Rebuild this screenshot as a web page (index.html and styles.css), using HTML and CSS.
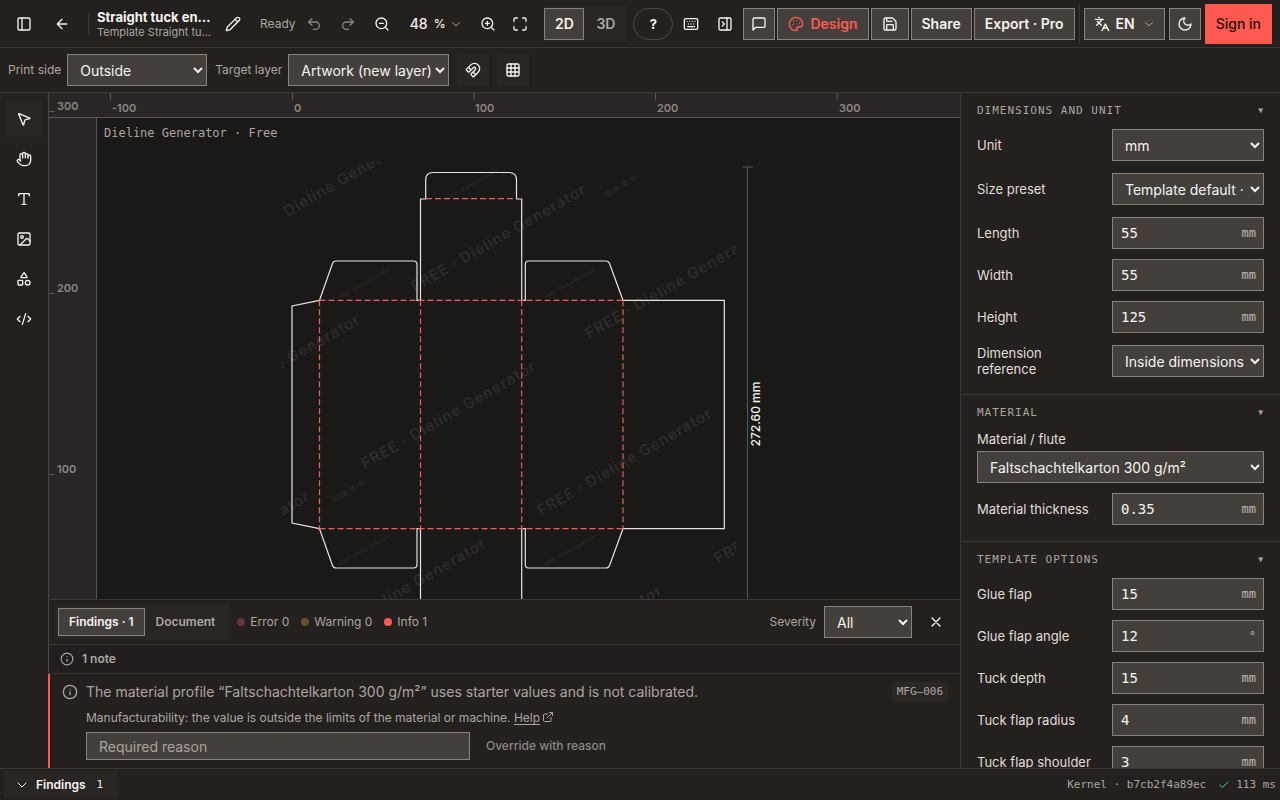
FILE: index.html
```html
<!DOCTYPE html>
<html lang="en">
<head>
<meta charset="utf-8">
<meta name="viewport" content="width=device-width, initial-scale=1">
<title>Dieline Generator</title>
<link rel="stylesheet" href="styles.css">
</head>
<body>
<div class="app">
  <header class="topbar">
    <button class="icon-btn" aria-label="Toggle panel"><svg class="ic" viewBox="0 0 24 24"><rect x="3" y="3" width="18" height="18" rx="2"/><path d="M9 3v18"/></svg></button>
    <button class="icon-btn back" aria-label="Back"><svg class="ic" viewBox="0 0 24 24"><path d="m12 19-7-7 7-7M19 12H5"/></svg></button>
    <span class="divider"></span>
    <div class="title">
      <h1>Straight tuck en…</h1>
      <p>Template Straight tu…</p>
    </div>
    <button class="icon-btn rename" aria-label="Rename"><svg class="ic" viewBox="0 0 24 24"><path d="M21.174 6.812a1 1 0 0 0-3.986-3.987L3.842 16.174a2 2 0 0 0-.5.83l-1.321 4.352a.5.5 0 0 0 .623.622l4.353-1.32a2 2 0 0 0 .83-.497zM15 5l4 4"/></svg></button>
    <span class="status">Ready</span>
    <button class="icon-btn dim" aria-label="Undo"><svg class="ic" viewBox="0 0 24 24"><path d="M9 14 4 9l5-5"/><path d="M4 9h10.500a5.500 5.500 0 0 1 0 11H11"/></svg></button>
    <button class="icon-btn dim" aria-label="Redo"><svg class="ic" viewBox="0 0 24 24"><path d="m15 14 5-5-5-5"/><path d="M20 9H9.500a5.500 5.500 0 0 0 0 11H13"/></svg></button>
    <button class="icon-btn" aria-label="Zoom out"><svg class="ic" viewBox="0 0 24 24"><circle cx="11" cy="11" r="8"/><path d="m21 21-4.350-4.350M8 11h6"/></svg></button>
    <div class="zoom">
      <input type="text" value="48" aria-label="Zoom percent"><span>%</span>
      <button aria-label="Zoom presets"><svg class="ic small" viewBox="0 0 24 24"><path d="m5 9 7 7 7-7"/></svg></button>
    </div>
    <button class="icon-btn" aria-label="Zoom in"><svg class="ic" viewBox="0 0 24 24"><circle cx="11" cy="11" r="8"/><path d="m21 21-4.350-4.350M11 8v6M8 11h6"/></svg></button>
    <button class="icon-btn fit" aria-label="Fit to screen"><svg class="ic" viewBox="0 0 24 24"><path d="M8 3H5a2 2 0 0 0-2 2v3M21 8V5a2 2 0 0 0-2-2h-3M3 16v3a2 2 0 0 0 2 2h3M16 21h3a2 2 0 0 0 2-2v-3"/></svg></button>
    <div class="segment view">
      <button class="box-btn on">2D</button>
      <button class="seg-off">3D</button>
    </div>
    <button class="help" aria-label="Help">?</button>
    <button class="icon-btn" aria-label="Keyboard shortcuts"><svg class="ic" viewBox="0 0 24 24"><rect x="2" y="4" width="20" height="16" rx="2"/><path d="M6 8h.01M10 8h.01M14 8h.01M18 8h.01M8 12h.01M12 12h.01M16 12h.01M7 16h10"/></svg></button>
    <button class="icon-btn" aria-label="Collapse inspector"><svg class="ic" viewBox="0 0 24 24"><rect x="3" y="3" width="18" height="18" rx="2"/><path d="M15 3v18M8 9l3 3-3 3"/></svg></button>
    <button class="box-btn square" aria-label="Comments"><svg class="ic" viewBox="0 0 24 24"><path d="M21 15a2 2 0 0 1-2 2H7l-4 4V5a2 2 0 0 1 2-2h14a2 2 0 0 1 2 2z"/></svg></button>
    <button class="box-btn design"><svg class="ic" viewBox="0 0 24 24"><path d="M12 22a10 10 0 1 1 10-10c0 2.500-2 4.500-4.500 4.500H15a2 2 0 0 0-1.500 3.300c.9 1 .2 2.200-1.500 2.200z"/><path d="M13.500 6.500h.01M17.500 10.500h.01M6.500 12.500h.01M8.500 7.500h.01"/></svg>Design</button>
    <button class="box-btn" aria-label="Save"><svg class="ic" viewBox="0 0 24 24"><path d="M15.200 3a2 2 0 0 1 1.400.6l3.800 3.800a2 2 0 0 1 .6 1.400V19a2 2 0 0 1-2 2H5a2 2 0 0 1-2-2V5a2 2 0 0 1 2-2z"/><path d="M17 21v-7a1 1 0 0 0-1-1H8a1 1 0 0 0-1 1v7M7 3v4a1 1 0 0 0 1 1h7"/></svg></button>
    <button class="box-btn">Share</button>
    <button class="box-btn">Export · Pro</button>
    <span class="divider account"></span>
    <button class="box-btn lang"><svg class="ic" viewBox="0 0 24 24"><path d="m5 8 6 6M4 14l6-6 2-3M2 5h12M7 2h1M22 22l-5-10-5 10M14 18h6"/></svg>EN<svg class="ic small" viewBox="0 0 24 24"><path d="m5 9 7 7 7-7"/></svg></button>
    <button class="box-btn square theme" aria-label="Dark theme"><svg class="ic" viewBox="0 0 24 24"><path d="M12 3a6 6 0 0 0 9 9 9 9 0 1 1-9-9z"/></svg></button>
    <button class="signin">Sign in</button>
  </header>

  <div class="subbar">
    <label for="side">Print side</label>
    <select id="side" class="w-side"><option>Outside</option></select>
    <label for="layer">Target layer</label>
    <select id="layer" class="w-layer"><option>Artwork (new layer)</option></select>
    <button class="icon-btn tint" aria-label="Snap"><svg class="ic" viewBox="0 0 24 24"><path d="m12 15 4 4M2.352 10.648a1.205 1.205 0 0 0 0 1.704l2.296 2.296a1.205 1.205 0 0 0 1.704 0l6.029-6.029a1 1 0 1 1 3 3l-6.029 6.029a1.205 1.205 0 0 0 0 1.704l2.296 2.296a1.205 1.205 0 0 0 1.704 0l6.365-6.367A1 1 0 0 0 8.716 4.282zM5 8l4 4"/></svg></button>
    <button class="icon-btn tint" aria-label="Grid"><svg class="ic" viewBox="0 0 24 24"><rect x="3" y="3" width="18" height="18" rx="2"/><path d="M3 9h18M3 15h18M9 3v18M15 3v18"/></svg></button>
  </div>

  <main class="work">
    <nav class="rail" aria-label="Tools">
      <button class="active" aria-label="Select"><svg class="ic" viewBox="0 0 24 24"><path d="M4.037 4.688a.495.495 0 0 1 .651-.651l16 6.500a.5.5 0 0 1-.063.947l-6.124 1.580a2 2 0 0 0-1.438 1.435l-1.579 6.126a.5.5 0 0 1-.947.063z"/></svg></button>
      <button aria-label="Pan"><svg class="ic" viewBox="0 0 24 24"><path d="M18 11V6a2 2 0 0 0-4 0M14 10V4a2 2 0 0 0-4 0v2M10 10.500V6a2 2 0 0 0-4 0v8"/><path d="M18 8a2 2 0 1 1 4 0v6a8 8 0 0 1-8 8h-2c-2.800 0-4.500-.860-5.990-2.340l-3.600-3.600a2 2 0 0 1 2.830-2.820L7 15"/></svg></button>
      <button aria-label="Text"><svg class="ic" viewBox="0 0 24 24"><path d="M12 4v16M4 7V5a1 1 0 0 1 1-1h14a1 1 0 0 1 1 1v2M9 20h6"/></svg></button>
      <button aria-label="Image"><svg class="ic" viewBox="0 0 24 24"><rect x="3" y="3" width="18" height="18" rx="2"/><circle cx="9" cy="9" r="2"/><path d="m21 15-3.086-3.086a2 2 0 0 0-2.828 0L6 21"/></svg></button>
      <button aria-label="Shapes"><svg class="ic" viewBox="0 0 24 24"><path d="M8.300 10a.7.7 0 0 1-.626-1.079L11.400 3a.7.7 0 0 1 1.198-.043L16.300 8.900a.7.7 0 0 1-.572 1.100z"/><rect x="3" y="14" width="7" height="7" rx="1"/><circle cx="17.500" cy="17.500" r="3.500"/></svg></button>
      <button aria-label="Code"><svg class="ic" viewBox="0 0 24 24"><path d="m18 16 4-4-4-4M6 8l-4 4 4 4M14.500 4l-5 16"/></svg></button>
    </nav>

    <section class="stage">
      <svg class="canvas" viewBox="49 93 911 506" preserveAspectRatio="xMinYMin slice" role="img" aria-label="Dieline drawing">
        <defs>
          <clipPath id="mark-area"><rect x="281" y="162" width="455" height="500"/></clipPath>
        </defs>
        <g class="mark" clip-path="url(#mark-area)">
          <text transform="translate(239 245) rotate(-30)">FREE · Dieline Generator</text>
          <text transform="translate(415 292) rotate(-30)">FREE · Dieline Generator</text>
          <text transform="translate(589 339) rotate(-30)">FREE · Dieline Generator</text>
          <text transform="translate(189 422) rotate(-30)">FREE · Dieline Generator</text>
          <text transform="translate(365 469) rotate(-30)">FREE · Dieline Generator</text>
          <text transform="translate(541 516) rotate(-30)">FREE · Dieline Generator</text>
          <text transform="translate(718 564) rotate(-30)">FREE · Dieline Generator</text>
          <text transform="translate(139 599) rotate(-30)">FREE · Dieline Generator</text>
          <text transform="translate(315 646) rotate(-30)">FREE · Dieline Generator</text>
          <text transform="translate(491 693) rotate(-30)">FREE · Dieline Generator</text>
        </g>
        <g class="mark-date">
          <text transform="translate(605 198) rotate(-30)">2026-10-11</text>
          <text transform="translate(333 503) rotate(-30)">2026-10-11</text>
        </g>
        <g class="mark-small">
          <text transform="translate(448 200) rotate(-30)">FREE · Dieline Generator</text>
          <text transform="translate(340 299) rotate(-30)">FREE · Dieline Generator</text>
          <text transform="translate(546 299) rotate(-30)">FREE · Dieline Generator</text>
          <text transform="translate(340 566) rotate(-30)">FREE · Dieline Generator</text>
          <text transform="translate(546 566) rotate(-30)">FREE · Dieline Generator</text>
        </g>
        <g class="cut">
          <path d="M319.500 300.300 292 306V523L319.500 528.700"/>
          <path d="M319.500 300.300 332.500 263.500Q333.500 261 336 261H413.500Q417 261 417 264.500V300.300H420.500V199H425.700V180Q425.700 172.500 433 172.500H509Q516.500 172.500 516.500 180V199H521.700V300.300H525.300V264.500Q525.300 261 528.500 261H606Q608.500 261 609.500 263.500L623 300.300H724.300V528.700H623L609.500 565.500Q608.500 568 606 568H528.500Q525.300 568 525.300 564.500V528.700H521.700V720"/>
          <path d="M420.500 720V528.700H417V564.500Q417 568 413.500 568H336Q333.500 568 332.500 565.500L319.500 528.700"/>
        </g>
        <g class="fold">
          <path d="M426 198.700H516.500M319.500 300.300H623M319.500 528.700H623"/>
          <path d="M319.500 300.300V528.700M420.500 300.300V528.700M521.700 300.300V528.700M623 300.300V528.700"/>
        </g>
        <path class="dim-line" d="M742.500 167H752.500M747.500 167V720"/>
        <text class="dim-text" transform="translate(760 414) rotate(-90)">272.60 mm</text>
        <text class="brand" x="104" y="137">Dieline Generator · Free</text>
        <path class="ruler-bg" d="M48 93H3000V117H96V3000H48Z"/>
        <path class="ruler-line" d="M48 117.500H3000M96.500 117V3000M48 111.500H55M48 293.500H55M48 474.500H55M110.500 93V100M292.500 93V100M474 93V100M655.500 93V100M837 93V100"/>
        <g class="ruler-text">
          <text x="57" y="110">300</text><text x="57" y="292">200</text><text x="57" y="473">100</text>
          <text x="112" y="112">-100</text><text x="294" y="112">0</text><text x="475" y="112">100</text><text x="657" y="112">200</text><text x="839" y="112">300</text>
        </g>
      </svg>

      <section class="findings">
        <div class="findings-head">
          <div class="segment tabs">
            <button class="box-btn on">Findings · 1</button>
            <button class="seg-off">Document</button>
          </div>
          <span class="count error">Error 0</span>
          <span class="count warning">Warning 0</span>
          <span class="count info">Info 1</span>
          <label for="severity">Severity</label>
          <select id="severity" class="w-severity"><option>All</option></select>
          <button class="icon-btn" aria-label="Close"><svg class="ic" viewBox="0 0 24 24"><path d="M18 6 6 18M6 6l12 12"/></svg></button>
        </div>
        <div class="findings-note"><svg class="ic note" viewBox="0 0 24 24"><circle cx="12" cy="12" r="10"/><path d="M12 16v-4M12 8h.01"/></svg>1 note</div>
        <article class="finding">
          <svg class="ic" viewBox="0 0 24 24"><circle cx="12" cy="12" r="10"/><path d="M12 16v-4M12 8h.01"/></svg>
          <div class="finding-body">
            <div class="finding-title"><p>The material profile “Faltschachtelkarton 300 g/m²” uses starter values and is not calibrated.</p><code>MFG–006</code></div>
            <p class="finding-desc">Manufacturability: the value is outside the limits of the material or machine. <a href="#help">Help</a> <svg class="ic ext" viewBox="0 0 24 24"><path d="M15 3h6v6M10 14 21 3M18 13v6a2 2 0 0 1-2 2H5a2 2 0 0 1-2-2V8a2 2 0 0 1 2-2h6"/></svg></p>
            <div class="override"><input type="text" placeholder="Required reason" aria-label="Required reason"><button>Override with reason</button></div>
          </div>
        </article>
      </section>
    </section>

    <aside class="inspector">
      <section>
        <h2>Dimensions and unit<span>▼</span></h2>
        <div class="row pick"><label for="unit">Unit</label><select id="unit"><option>mm</option></select></div>
        <div class="row pick"><label for="preset">Size preset</label><select id="preset"><option>Template default ·</option></select></div>
        <div class="row"><label for="len">Length</label><div class="field"><input id="len" value="55"><span>mm</span></div></div>
        <div class="row"><label for="wid">Width</label><div class="field"><input id="wid" value="55"><span>mm</span></div></div>
        <div class="row"><label for="hei">Height</label><div class="field"><input id="hei" value="125"><span>mm</span></div></div>
        <div class="row pick"><label for="ref">Dimension reference</label><select id="ref"><option>Inside dimensions</option></select></div>
      </section>
      <section>
        <h2>Material<span>▼</span></h2>
        <div class="stack"><label for="mat">Material / flute</label><select id="mat"><option>Faltschachtelkarton 300 g/m²</option></select></div>
        <div class="row"><label for="thick">Material thickness</label><div class="field"><input id="thick" value="0.35"><span>mm</span></div></div>
      </section>
      <section>
        <h2>Template options<span>▼</span></h2>
        <div class="row"><label for="gf">Glue flap</label><div class="field"><input id="gf" value="15"><span>mm</span></div></div>
        <div class="row"><label for="ga">Glue flap angle</label><div class="field"><input id="ga" value="12"><span>°</span></div></div>
        <div class="row"><label for="td">Tuck depth</label><div class="field"><input id="td" value="15"><span>mm</span></div></div>
        <div class="row"><label for="tr">Tuck flap radius</label><div class="field"><input id="tr" value="4"><span>mm</span></div></div>
        <div class="row"><label for="ts">Tuck flap shoulder</label><div class="field"><input id="ts" value="3"><span>mm</span></div></div>
      </section>
    </aside>
  </main>

  <footer class="statusbar">
    <button><svg class="ic tiny" viewBox="0 0 24 24"><path d="m4 8 8 8 8-8"/></svg>Findings<span>1</span></button>
    <p>Kernel · b7cb2f4a89ec</p>
    <p class="time"><svg class="ic small" viewBox="0 0 24 24"><path d="M20 6 9 17l-5-5"/></svg>113 ms</p>
  </footer>
</div>
</body>
</html>
```
FILE: styles.css
```css
:root {
  --bg: #24201e;
  --raised: #292523;
  --field: #453f3b;
  --edge: #8b817b;
  --line: #3c3734;
  --text: #f7f3f1;
  --muted: #ada5a0;
  --accent: #ff5a52;
  --ui: Inter, "Liberation Sans", sans-serif;
  --mono: "DejaVu Sans Mono", "Liberation Mono", monospace;
}
* { box-sizing: border-box; }
body { margin: 0; background: var(--bg); color: var(--text); font: 12px/16px var(--ui); }
h1, h2, p { margin: 0; }
button, input, select { font: inherit; color: inherit; margin: 0; }
button { background: none; border: 0; padding: 0; flex: none; }
label { color: #e2ddda; }
.app { height: 100vh; display: flex; flex-direction: column; overflow: hidden; }

.ic { width: 16px; height: 16px; fill: none; stroke: currentColor; stroke-width: 2; stroke-linecap: round; stroke-linejoin: round; flex: none; display: block; }
.ic.small { width: 12px; height: 12px; }
.ic.note { width: 14px; height: 14px; }
.ic.ext { width: 12px; height: 12px; display: inline-block; vertical-align: -1px; margin-left: -1px; }
.ic.tiny { width: 12px; height: 12px; }

.icon-btn { width: 32px; height: 32px; display: grid; place-items: center; }
.icon-btn.dim { color: #8a837f; }
.box-btn { height: 32px; display: flex; align-items: center; gap: 6px; padding: 0 10px; background: var(--field); border: 1px solid var(--edge); font-size: 14px; font-weight: 600; }
.box-btn.square { width: 32px; padding: 0; justify-content: center; }
.segment { display: flex; align-items: center; background: var(--raised); }
.seg-off { color: var(--muted); font-weight: 600; }
select { height: 32px; padding: 0 0 0 8px; background-color: var(--field); border: 1px solid var(--edge); border-radius: 0; font-size: 14px; min-width: 0; }

.topbar { height: 48px; flex: none; display: flex; align-items: center; gap: 2px; padding: 0 8px; border-bottom: 1px solid var(--line); }
.back { margin-left: 4px; }
.divider { width: 1px; height: 20px; flex: none; background: var(--line); margin: 0 6px 0 8px; }
.divider.account { height: 40px; margin: 0 2px; }
.title { width: 116px; white-space: nowrap; }
.title h1 { font-size: 13px; line-height: 16px; font-weight: 700; }
.title p { font-size: 11px; line-height: 14px; color: var(--muted); }
.rename { margin-left: 4px; }
.status { color: var(--muted); margin-left: 9px; }
.zoom { display: flex; align-items: center; width: 78px; padding-left: 10px; font-size: 14px; font-weight: 500; }
.zoom input { width: 24px; padding: 0; border: 0; background: none; }
.zoom span { font-size: 12px; }
.zoom button { color: var(--muted); margin-left: 4px; }
.fit { margin-left: -2px; }
.view { margin: 0 4px 0 6px; height: 36px; }
.view .box-btn { width: 40px; padding: 0; justify-content: center; }
.view .seg-off { width: 43px; font-size: 14px; }
.help { width: 40px; height: 32px; border: 1px solid #4d4743; border-radius: 16px; font-size: 13px; font-weight: 700; }
.design { color: var(--accent); }
.lang { padding: 0 9px; }
.lang .small { color: var(--muted); margin-left: 2px; }
.theme { margin-left: 2px; }
.signin { height: 40px; padding: 0 11px; margin-left: 2px; background: var(--accent); color: #2b100e; font-size: 14px; font-weight: 500; }

.subbar { height: 45px; flex: none; display: flex; align-items: center; gap: 8px; padding: 0 8px; border-bottom: 1px solid var(--line); }
.subbar label { color: var(--muted); }
.subbar label + select { margin-left: -2px; }
.w-side { width: 140px; }
.w-layer { width: 161px; }
.tint { background: var(--raised); }

.work { flex: 1; min-height: 0; display: grid; grid-template-columns: 48px minmax(0, 1fr) 320px; }
.rail { display: flex; flex-direction: column; align-items: center; gap: 4px; padding: 8px 0; }
.rail button { width: 36px; height: 36px; display: grid; place-items: center; }
.rail .active { background: #292624; }
.stage { display: flex; flex-direction: column; min-height: 0; border-left: 1px solid #4a4542; }
.canvas { flex: 1; min-height: 0; width: 100%; background: #1a1917; display: block; }

.cut path { fill: none; stroke: #e6e4e1; stroke-width: 1.2; }
.fold path { fill: none; stroke: #e8605a; stroke-width: 1.2; stroke-dasharray: 6 3; }
.mark text { font: 600 15px var(--ui); letter-spacing: 1px; fill: #2c2b29; }
.mark-date text { font: 500 7px var(--ui); fill: #302e2c; }
.mark-small text { font: 500 5px var(--ui); fill: #2c2a28; }
.dim-line { fill: none; stroke: #5a5754; stroke-width: 1; }
.dim-text { font: 500 12px var(--ui); fill: var(--text); text-anchor: middle; }
.brand { font: 12px var(--mono); fill: var(--muted); }
.ruler-bg { fill: #2a2625; }
.ruler-line { fill: none; stroke: #5b5653; }
.ruler-text text { font: 600 11px var(--ui); fill: #8c8682; }

.findings { flex: none; border-top: 1px solid var(--line); }
.findings label, .count { color: var(--muted); }
.findings-head { height: 45px; display: flex; align-items: center; padding: 0 8px 0 7px; border-bottom: 1px solid var(--line); }
.tabs { height: 36px; padding: 0 2px; margin-right: 8px; }
.tabs .box-btn { height: 28px; font-size: 12px; }
.tabs .seg-off { padding: 0 12px 0 11px; }
.count { display: flex; align-items: center; gap: 5px; margin-right: 12px; }
.count::before { content: ""; width: 8px; height: 8px; border-radius: 50%; background: var(--accent); }
.count.error::before { background: #6b3339; }
.count.warning::before { background: #63502b; }
.findings-head label { margin-left: auto; margin-right: 8px; }
.w-severity { width: 88px; margin-right: 8px; }
.findings-note { height: 29px; display: flex; align-items: center; gap: 8px; padding: 0 11px; border-bottom: 1px solid var(--line); color: var(--muted); font-weight: 600; background: #231e1d; }
.finding { display: flex; gap: 8px; padding: 8px 12px 8px 12px; margin-left: -1px; border-left: 2px solid var(--accent); color: var(--muted); }
.finding > .ic { margin-top: 2px; }
.finding-body { flex: 1; min-width: 0; }
.finding-title { display: flex; justify-content: space-between; align-items: center; font-size: 14px; line-height: 20px; }
.finding-title code { font: 11px/20px var(--mono); padding: 0 5px; background: #2b2725; border-radius: 3px; }
.finding-desc { margin: 8px 0 6px; }
.finding-desc a { color: inherit; text-underline-offset: 2px; }
.override { display: flex; align-items: center; gap: 16px; }
.override input { width: 384px; height: 28px; padding: 0 12px; background: var(--field); border: 1px solid var(--edge); font-size: 14px; }
.override input::placeholder { color: #aaa29d; opacity: 1; }
.override button { font-weight: 500; color: #8f8884; }

.inspector { border-left: 1px solid var(--line); overflow: hidden; min-height: 0; }
.inspector section { padding: 0 16px 17px; border-bottom: 1px solid var(--line); }
.inspector section + section { padding-bottom: 16px; }
.inspector h2 { height: 36px; display: flex; justify-content: space-between; font: 11px/36px var(--mono); letter-spacing: 1px; text-transform: uppercase; color: var(--muted); }
.inspector h2 span { font-size: 8px; }
.row { display: grid; grid-template-columns: minmax(0, 1fr) 152px; gap: 12px; align-items: center; min-height: 32px; font-size: 13px; }
.row + .row, .stack + .row { margin-top: 10px; }
.pick + .row, .row + .pick { margin-top: 12px; }
.stack { display: flex; flex-direction: column; gap: 4px; font-size: 13px; }
.field { height: 32px; display: flex; align-items: center; background: var(--field); border: 1px solid var(--edge); padding: 0 7px 0 8px; font-family: var(--mono); }
.field input { flex: 1; min-width: 0; border: 0; padding: 0; background: none; font-size: 14px; }
.field span { font-size: 12px; color: #bfb7b2; }

.statusbar { height: 32px; flex: none; display: flex; align-items: center; gap: 12px; padding: 0 4px; border-top: 1px solid var(--line); font: 11px/16px var(--mono); color: var(--muted); }
.statusbar button { height: 28px; display: flex; align-items: center; gap: 8px; padding: 0 14px 0 12px; margin-right: auto; background: var(--raised); color: var(--text); font: 600 12px/16px var(--ui); }
.statusbar button span { font: 11px/16px var(--mono); margin-left: 3px; }
.time { display: flex; align-items: center; gap: 6px; }
.time .ic { color: #34d399; }
```
